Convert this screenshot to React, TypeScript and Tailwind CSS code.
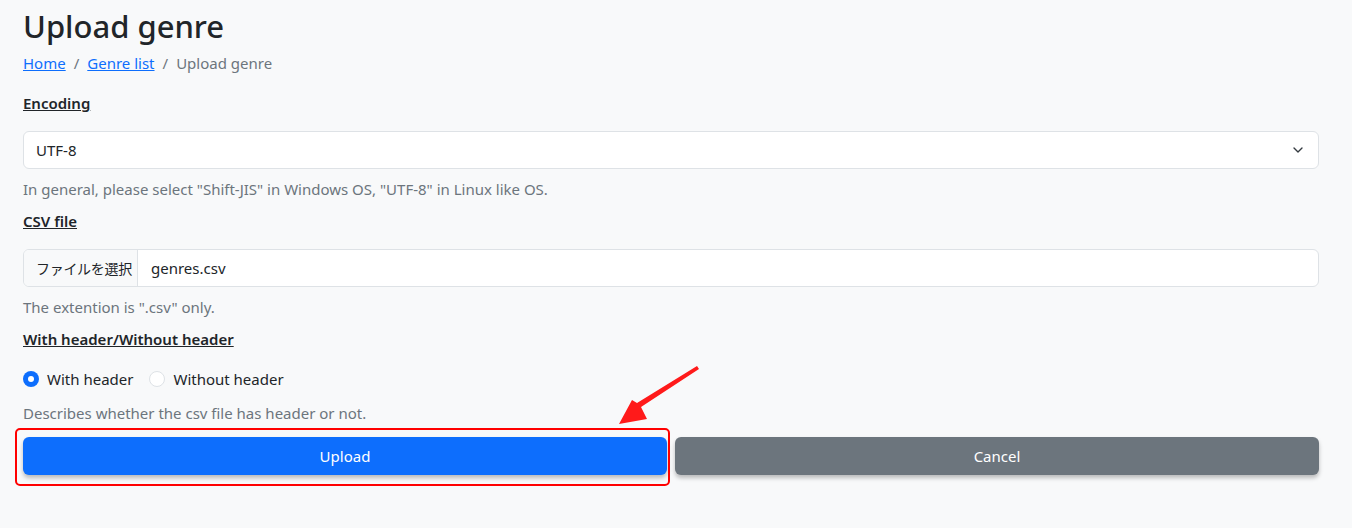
import { ChevronDown } from "lucide-react";

const font = { fontFamily: '"Noto Sans", "Noto Sans CJK JP", sans-serif' };

export default function App() {
  return (
    <div className="relative h-[528px] w-[1352px] bg-[#f8f9fa] text-[#212529]" style={font}>
      <div className="w-[1296px] ml-[23px] pt-[4px]">
        <h1 className="text-[31px] font-medium leading-[44px]">Upload genre</h1>
        <nav className="mt-[4px] text-[15px] leading-[22px] flex gap-[8px] text-[#6c757d]">
          <a href="#" className="text-[#0d6efd] underline">Home</a>
          <span>/</span>
          <a href="#" className="text-[#0d6efd] underline">Genre list</a>
          <span>/</span>
          <span>Upload genre</span>
        </nav>

        <div className="mt-[18px] text-[15px] font-semibold underline leading-[22px]">Encoding</div>
        <div className="mt-[17px] h-[38px] rounded-[6px] border border-[#dee2e6] bg-white flex items-center justify-between pl-[12px] pr-[12px] text-[15px]">
          <span>UTF-8</span>
          <ChevronDown size={16} strokeWidth={2} className="text-[#343a40]" />
        </div>
        <p className="mt-[9px] text-[15px] leading-[22px] text-[#6c757d]">
          In general, please select "Shift-JIS" in Windows OS, "UTF-8" in Linux like OS.
        </p>

        <div className="mt-[10px] text-[15px] font-semibold underline leading-[22px]">CSV file</div>
        <div className="mt-[17px] h-[38px] rounded-[6px] border border-[#dee2e6] bg-white flex text-[15px] overflow-hidden">
          <div className="w-[114px] shrink-0 whitespace-nowrap bg-[#f8f9fa] border-r border-[#dee2e6] flex items-center pl-[12px] text-[14px] tracking-[-0.3px]">ファイルを選択</div>
          <div className="flex items-center pl-[13px]">genres.csv</div>
        </div>
        <p className="mt-[9px] text-[15px] leading-[22px] text-[#6c757d]">The extention is ".csv" only.</p>

        <div className="mt-[10px] text-[15px] font-semibold underline leading-[22px]">With header/Without header</div>
        <div className="mt-[18px] flex items-center text-[15px] leading-[22px]">
          <span className="w-[16px] h-[16px] rounded-full bg-[#0d6efd] flex items-center justify-center">
            <span className="w-[6px] h-[6px] rounded-full bg-white" />
          </span>
          <span className="ml-[8px]">With header</span>
          <span className="ml-[16px] w-[16px] h-[16px] rounded-full bg-white border border-[#dee2e6]" />
          <span className="ml-[8px]">Without header</span>
        </div>
        <p className="mt-[12px] text-[15px] leading-[22px] text-[#6c757d]">Describes whether the csv file has header or not.</p>

        <div className="mt-[13px] grid grid-cols-2 gap-[8px]">
          <button className="h-[38px] rounded-[6px] bg-[#0d6efd] text-white text-[15px] shadow-[0_3px_4px_rgba(0,0,0,0.25)]">Upload</button>
          <button className="h-[38px] rounded-[6px] bg-[#6c757d] text-white text-[15px] shadow-[0_3px_4px_rgba(0,0,0,0.25)]">Cancel</button>
        </div>
      </div>

      <div className="absolute left-[15px] top-[428px] w-[655px] h-[58px] rounded-[5px] border-2 border-[#ff0000]" />
      <svg className="absolute left-0 top-0" width="1352" height="528" viewBox="0 0 1352 528">
        <polygon points="697,366 699,369 641,407 647,419 619,424 632,400 637,403" fill="#ff1a1a" />
      </svg>
    </div>
  );
}
